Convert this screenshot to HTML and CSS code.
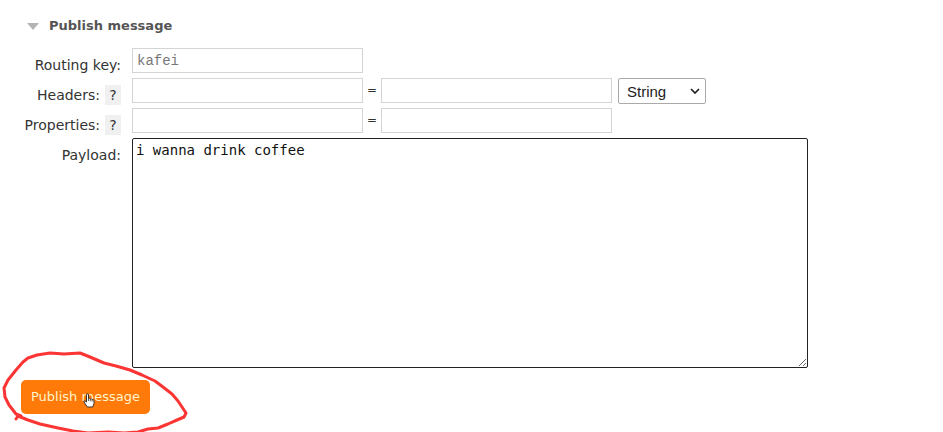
FILE: index.html
```
<!doctype html>
<html lang="en">
<head>
<meta charset="utf-8">
<title>Publish message</title>
<link rel="stylesheet" href="styles.css">
</head>
<body>
<div class="section">
	<h2><svg class="arrow" width="12" height="7" viewBox="0 0 12 7"><path d="M0 0H12L6 7Z" fill="#b4b4b4"/></svg>Publish message</h2>
	<form class="publish" onsubmit="return false">
		<div class="form">
			<div class="label"><label for="routing_key">Routing key:</label></div>
			<div class="fields"><input type="text" id="routing_key" value="kafei"></div>

			<div class="label"><label for="header_key">Headers:</label><button type="button" class="help">?</button></div>
			<div class="fields">
				<input type="text" id="header_key">
				<span class="equals">=</span>
				<input type="text" aria-label="Header value">
				<span class="select">
					<select aria-label="Header type">
						<option>String</option>
						<option>Number</option>
						<option>Boolean</option>
						<option>List</option>
					</select>
					<svg class="chevron" width="10" height="6" viewBox="0 0 10 6"><path d="M1 1L5 5L9 1" fill="none" stroke="#222" stroke-width="1.7"/></svg>
				</span>
			</div>

			<div class="label"><label for="property_key">Properties:</label><button type="button" class="help">?</button></div>
			<div class="fields">
				<input type="text" id="property_key">
				<span class="equals">=</span>
				<input type="text" aria-label="Property value">
			</div>

			<div class="label"><label for="payload">Payload:</label></div>
			<div class="fields"><textarea id="payload" rows="13" spellcheck="false">i wanna drink coffee</textarea></div>
		</div>
		<div class="actions">
			<button type="submit" class="submit">Publish message</button>
			<svg class="cursor" width="12" height="15" viewBox="0 0 12 15"><path d="M3.5 9V2Q3.5 .7 4.5 .7T5.5 2V5.5Q6.5 4.8 7.3 6Q8.5 5.3 9.1 6.6Q11 6 11 8V10.5L9.8 14H4.3L1 9Q.7 7.4 2 7.8Z" fill="#fff" stroke="#333" stroke-width="1"/><path d="M5.5 5.5V8M7.3 6V8.3M9.1 6.6V8.6" stroke="#333" stroke-width=".8"/></svg>
			<svg class="marker" width="190" height="84" viewBox="0 0 190 84"><path d="M21 66L16 64L9 55L5 47L4 38L8 30L16 20L23 12L28 8L37 5L50 3L64 4L80 3L90 7L104 13L116 16L130 20L142 25L155 31L163 37L172 44L178 51L182 57L186 63L184 67L177 70L168 74L158 78L148 79L138 82L124 83L108 82L88 83L73 81L58 78L40 74L28 70L18 66L16 69"/></svg>
		</div>
	</form>
</div>
</body>
</html>
```
FILE: styles.css
```
* {
	box-sizing: border-box;
}

body {
	min-height: 100vh;
	margin: 0;
	color: #333;
	background-color: #fff;
	font-family: "DejaVu Sans", Verdana, sans-serif;
	font-size: 14px;
	line-height: 20px;
}

.section {
	padding: 16px 21px 0;
}

h2 {
	display: flex;
	align-items: center;
	margin: 0 0 12px;
	padding-left: 6px;
	color: #555;
	font-size: 13px;
	line-height: 20px;
}

.arrow {
	margin-right: 10px;
}

.form {
	display: grid;
	grid-template-columns: 100px minmax(0, 676px);
	column-gap: 11px;
	row-gap: 3px;
}

.label {
	display: flex;
	justify-content: flex-end;
	align-items: center;
	height: 20px;
	margin-top: 7px;
	white-space: nowrap;
}

.help {
	width: 16px;
	height: 20px;
	margin-left: 5px;
	padding: 0;
	border: 0;
	color: #333;
	background-color: #f0f0f0;
	font: inherit;
}

.fields {
	display: flex;
	align-items: flex-start;
}

input {
	flex: 0 1 231px;
	min-width: 0;
	height: 25px;
	padding: 0 4px;
	border: 1px solid #d4d4d4;
	color: #777;
	background-color: #fff;
	font-family: "Liberation Mono", "Courier New", monospace;
	font-size: 14px;
}

.equals {
	width: 18px;
	font-size: 12px;
	line-height: 24px;
	text-align: center;
}

.select {
	position: relative;
	width: 88px;
	height: 26px;
	margin-left: 6px;
}

select {
	width: 100%;
	height: 100%;
	padding: 0 8px;
	border: 1px solid #aaa;
	border-radius: 2px;
	color: #222;
	background-color: #fff;
	font-family: "Liberation Sans", Arial, sans-serif;
	font-size: 15px;
	appearance: none;
}

.chevron {
	position: absolute;
	top: 10px;
	right: 6px;
	pointer-events: none;
}

textarea {
	width: 100%;
	height: 230px;
	padding: 3px;
	border: 1px solid #222;
	border-radius: 2px;
	outline: 0;
	color: #111;
	background-color: #fff;
	font-family: "DejaVu Sans Mono", Consolas, monospace;
	font-size: 14px;
}

.actions {
	position: relative;
	width: max-content;
	margin-top: 12px;
}

.submit {
	display: block;
	height: 34px;
	padding: 0 10px;
	border: 0;
	border-radius: 5px;
	color: #fff4cc;
	background-color: #ff7a08;
	font: inherit;
	font-size: 13px;
}

.cursor {
	position: absolute;
	top: 13px;
	left: 62px;
}

/* hand-drawn ring round the button */
.marker {
	position: absolute;
	top: -30px;
	left: -21px;
	fill: none;
	stroke: #fb3434;
	stroke-width: 3;
	stroke-linecap: round;
	stroke-linejoin: round;
	pointer-events: none;
}
```
